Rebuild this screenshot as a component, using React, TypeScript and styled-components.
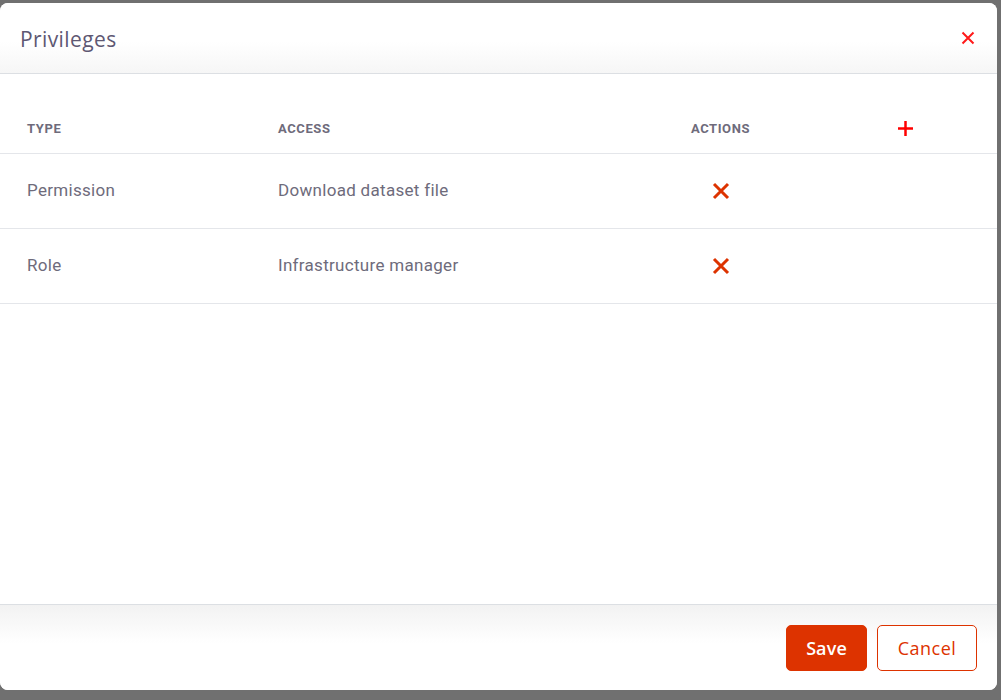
import React from "react";
import styled, { createGlobalStyle } from "styled-components";

const Global = createGlobalStyle`
  html, body { margin: 0; padding: 0; background: #707070; }
  body { font-family: Roboto, "Liberation Sans", sans-serif; }
  * { box-sizing: border-box; }
`;

const Page = styled.div`
  width: 1001px;
  height: 700px;
  padding: 3px 4px 10px 0;
  display: flex;
`;

const Modal = styled.div`
  flex: 1;
  background: #fff;
  border-radius: 8px;
  display: flex;
  flex-direction: column;
  overflow: hidden;
`;

const Header = styled.div`
  height: 71px;
  flex: none;
  display: flex;
  align-items: center;
  justify-content: space-between;
  padding: 0 22px 0 20px;
  border-bottom: 1px solid #dcdfe3;
  background: linear-gradient(to bottom, #ffffff 55%, #f6f6f6 100%);
`;

const Title = styled.h1`
  margin: 0;
  font-family: "Open Sans", "Noto Sans", sans-serif;
  font-weight: 400;
  font-size: 21px;
  letter-spacing: 0.4px;
  color: #5e5873;
  padding-top: 2px;
`;

const IconButton = styled.button`
  border: 0;
  background: transparent;
  padding: 0;
  display: flex;
  align-items: center;
  justify-content: center;
  cursor: pointer;
`;

const Body = styled.div`
  flex: 1;
  padding-top: 29px;
`;

const Row = styled.div<{ $head?: boolean }>`
  display: grid;
  grid-template-columns: 251px 412px 115px 1fr;
  align-items: center;
  height: ${(p) => (p.$head ? "51px" : "75px")};
  border-bottom: 1px solid #e4e6ea;
`;

const HeadCell = styled.div<{ $center?: boolean }>`
  padding-left: ${(p) => (p.$center ? "0" : "27px")};
  text-align: ${(p) => (p.$center ? "center" : "left")};
  font-size: 13px;
  font-weight: 700;
  letter-spacing: 0.6px;
  text-transform: uppercase;
  color: #6e6b7b;
  padding-top: 1px;
`;

const Cell = styled.div`
  padding-left: 27px;
  font-size: 17px;
  letter-spacing: 0.3px;
  color: #6e6b7b;
  padding-bottom: 2px;
`;

const ActionCell = styled.div`
  display: flex;
  justify-content: center;
`;

const AddCell = styled.div`
  padding-left: 119px;
  display: flex;
`;

const Footer = styled.div`
  height: 86px;
  flex: none;
  border-top: 1px solid #dcdfe3;
  background: linear-gradient(to bottom, #f2f2f2 0%, #ffffff 45%);
  display: flex;
  align-items: center;
  justify-content: flex-end;
  gap: 10px;
  padding: 0 20px 0 0;
`;

const Button = styled.button<{ $primary?: boolean }>`
  height: 46px;
  padding: 0;
  width: ${(p) => (p.$primary ? "81px" : "100px")};
  border-radius: 5px;
  font-family: "Open Sans", "Noto Sans", sans-serif;
  font-size: 18px;
  letter-spacing: ${(p) => (p.$primary ? "0.1px" : "0.5px")};
  font-weight: ${(p) => (p.$primary ? 600 : 400)};
  color: ${(p) => (p.$primary ? "#fff" : "#dd3300")};
  background: ${(p) => (p.$primary ? "#dd3300" : "#fff")};
  border: 1px solid #dd3300;
  cursor: pointer;
  margin-top: 1px;
`;

const CloseIcon = () => (
  <svg width="14" height="14" viewBox="0 0 14 14">
    <path d="M1.5 1.5 L12.5 12.5 M12.5 1.5 L1.5 12.5" stroke="#ff1a1a" strokeWidth="2" fill="none" />
  </svg>
);

const RemoveIcon = () => (
  <svg width="18" height="18" viewBox="0 0 18 18">
    <path d="M2 2 L16 16 M16 2 L2 16" stroke="#dd3300" strokeWidth="3" fill="none" />
  </svg>
);

const PlusIcon = () => (
  <svg width="17" height="17" viewBox="0 0 17 17">
    <path d="M8.5 1 V16 M1 8.5 H16" stroke="#ff0000" strokeWidth="2.5" fill="none" />
  </svg>
);

const rows = [
  { type: "Permission", access: "Download dataset file" },
  { type: "Role", access: "Infrastructure manager" },
];

export default function App() {
  return (
    <>
      <Global />
      <Page>
        <Modal>
          <Header>
            <Title>Privileges</Title>
            <IconButton aria-label="Close">
              <CloseIcon />
            </IconButton>
          </Header>
          <Body>
            <Row $head>
              <HeadCell>Type</HeadCell>
              <HeadCell>Access</HeadCell>
              <HeadCell $center>Actions</HeadCell>
              <AddCell>
                <IconButton aria-label="Add">
                  <PlusIcon />
                </IconButton>
              </AddCell>
            </Row>
            {rows.map((r) => (
              <Row key={r.type}>
                <Cell>{r.type}</Cell>
                <Cell>{r.access}</Cell>
                <ActionCell>
                  <IconButton aria-label="Remove">
                    <RemoveIcon />
                  </IconButton>
                </ActionCell>
                <div />
              </Row>
            ))}
          </Body>
          <Footer>
            <Button $primary>Save</Button>
            <Button>Cancel</Button>
          </Footer>
        </Modal>
      </Page>
    </>
  );
}
